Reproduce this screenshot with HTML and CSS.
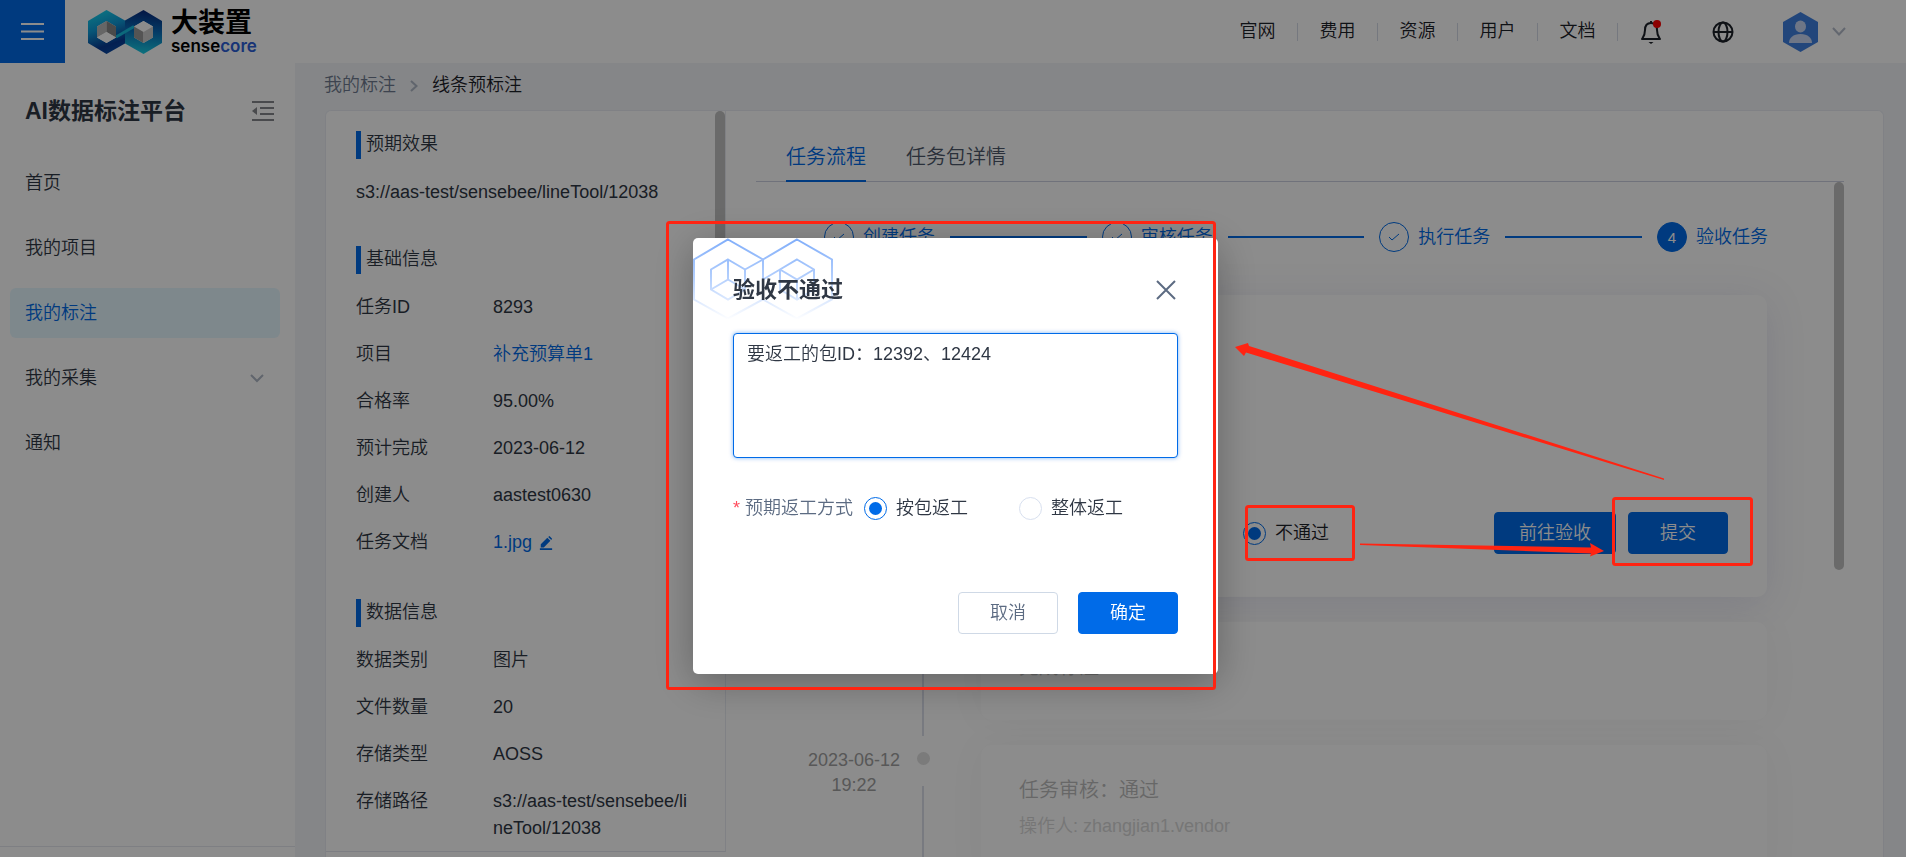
FILE: index.html
```html
<!DOCTYPE html>
<html lang="zh-CN">
<head>
<meta charset="utf-8">
<title>AI数据标注平台</title>
<link rel="stylesheet" href="styles.css">
</head>
<body>
<div class="app">
  <header class="header">
    <button class="menu-btn" type="button" aria-label="菜单">
      <svg width="24" height="18" viewBox="0 0 24 18" stroke="#fff" stroke-width="2"><path d="M0 2h23M0 9.500h23M0 17h23"/></svg>
    </button>
    <a class="logo" href="#">
      <svg width="74" height="44" viewBox="0 0 74 44">
        <defs>
          <linearGradient id="lg1" x1="0.300" y1="0" x2="0.600" y2="1"><stop offset="0" stop-color="#17d3ee"/><stop offset=".4" stop-color="#0f9ad8"/><stop offset=".8" stop-color="#083a94"/><stop offset="1" stop-color="#0a4aa4"/></linearGradient>
          <linearGradient id="lg2" x1="0.500" y1="0" x2="0.400" y2="1"><stop offset="0" stop-color="#08287c"/><stop offset=".45" stop-color="#0a6ab8"/><stop offset="1" stop-color="#18d0e6"/></linearGradient>
        </defs>
        <path fill="url(#lg1)" fill-rule="evenodd" d="M18.500 0 37 10.500v23L18.500 44 0 33V11zM18.500 11 9 16.500v11l9.500 5.500 9.500-5.500v-11z"/>
        <path fill="url(#lg2)" fill-rule="evenodd" d="M55.500 0 74 11v22L55.500 44 37 33.500v-23zM55.500 11 46 16.500v11l9.500 5.500 9.500-5.500v-11z"/>
        <path d="M28 27 46 16.500" stroke="#16bfe0" stroke-width="3"/>
        <path fill="#bbb" d="M18.500 11v11L9 27.500v-11z"/><path fill="#888" d="M18.500 11v11l9.500 5.500v-11z"/><path fill="#fff" d="M18.500 22 28 27.500 18.500 33 9 27.500z"/>
        <path fill="#fff" d="M55.500 11 65 16.500 55.500 22 46 16.500z"/><path fill="#999" d="M46 16.500 55.500 22v11L46 27.500z"/><path fill="#ccc" d="M65 16.500 55.500 22v11l9.500-5.500z"/>
      </svg>
      <span class="logo-text"><span class="logo-cn">大装置</span><span class="logo-en">sense<span class="logo-core">core</span></span></span>
    </a>
    <nav class="top-nav">
      <a href="#">官网</a><a href="#">费用</a><a href="#">资源</a><a href="#">用户</a><a href="#">文档</a>
    </nav>
    <div class="tools">
      <button class="icon-btn" type="button" aria-label="消息">
        <svg width="22" height="26" viewBox="0 0 22 26" fill="none" stroke="#1d2129" stroke-width="2"><path d="M10 4c-4 0-6 3-6 7 0 5-1 6-3 9h18c-2-3-3-4-3-9 0-4-2-7-6-7z" stroke-linejoin="round"/><path d="M7.500 23h5l-2.500 2z" fill="#1d2129" stroke="none"/><path d="M10 2v2"/><circle cx="16" cy="5" r="4" fill="#f00" stroke="none"/></svg>
      </button>
      <button class="icon-btn" type="button" aria-label="语言">
        <svg width="22" height="22" viewBox="0 0 22 22" fill="none" stroke="#1d2129" stroke-width="2"><circle cx="11" cy="11" r="9.500"/><ellipse cx="11" cy="11" rx="4.500" ry="9.500"/><path d="M1.500 11h19"/></svg>
      </button>
      <button class="icon-btn user-btn" type="button" aria-label="账户">
        <svg width="35" height="40" viewBox="0 0 35 40"><path fill="#3f80e0" d="M17.500 0 35 10v20L17.500 40 0 30V10z"/><ellipse cx="17.500" cy="14.500" rx="5.500" ry="6" fill="#c9d8f5"/><path fill="#c9d8f5" d="M6 31c0-5 4-9 11.500-9S29 26 29 31z"/></svg>
        <svg width="14" height="9" viewBox="0 0 14 9" fill="none" stroke="#b4bccb" stroke-width="2"><path d="M1 1l6 6.500L13 1"/></svg>
      </button>
    </div>
  </header>
  <div class="body">
    <aside class="sidebar">
      <div class="side-head">
        <h1 class="side-title">AI数据标注平台</h1>
        <button class="icon-btn" type="button" aria-label="收起">
          <svg width="24" height="22" viewBox="0 0 24 22" stroke="#86888c" stroke-width="2"><path d="M1 2h22M9 8h14M9 14h14M1 20h22"/><path d="M1 11l5-4v8z" fill="#86888c" stroke="none"/></svg>
        </button>
      </div>
      <nav class="side-nav">
        <a class="side-item" href="#">首页</a>
        <a class="side-item" href="#">我的项目</a>
        <a class="side-item active" href="#">我的标注</a>
        <a class="side-item" href="#">我的采集<svg width="14" height="10" viewBox="0 0 14 10" fill="none" stroke="#b0b8c6" stroke-width="2"><path d="M1 2l6 6 6-6"/></svg></a>
        <a class="side-item" href="#">通知</a>
      </nav>
      <div class="side-foot"></div>
    </aside>
    <main class="main">
      <nav class="crumbs">
        <a href="#">我的标注</a>
        <svg width="8" height="12" viewBox="0 0 8 12" fill="none" stroke="#b0b8c6" stroke-width="2"><path d="M1 1l5.500 5L1 11"/></svg>
        <span class="crumb-current">线条预标注</span>
      </nav>
      <div class="panel">
        <section class="info">
          <div class="info-inner">
            <h2 class="section-title">预期效果</h2>
            <p class="path">s3://aas-test/sensebee/lineTool/12038</p>
            <h2 class="section-title">基础信息</h2>
            <dl class="fields">
              <dt>任务ID</dt><dd>8293</dd>
              <dt>项目</dt><dd><a href="#">补充预算单1</a></dd>
              <dt>合格率</dt><dd>95.00%</dd>
              <dt>预计完成</dt><dd>2023-06-12</dd>
              <dt>创建人</dt><dd>aastest0630</dd>
              <dt>任务文档</dt><dd><a class="doc" href="#">1.jpg<svg width="14" height="14" viewBox="0 0 16 16" fill="#006be8"><path d="M2 9.500 9.500 2l3.500 3.500L5.500 13H2zM10.500 1 12 0l3 3-1 1.500zM1 14h14v2H1z"/></svg></a></dd>
            </dl>
            <h2 class="section-title">数据信息</h2>
            <dl class="fields">
              <dt>数据类别</dt><dd>图片</dd>
              <dt>文件数量</dt><dd>20</dd>
              <dt>存储类型</dt><dd>AOSS</dd>
              <dt>存储路径</dt><dd>s3://aas-test/sensebee/lineTool/12038</dd>
            </dl>
          </div>
          <div class="scrollbar info-bar"></div>
        </section>
        <section class="flow">
          <div class="tabs">
            <button class="tab tab-on" type="button">任务流程</button>
            <button class="tab" type="button">任务包详情</button>
          </div>
          <div class="scroll-area">
            <ol class="steps">
              <li class="step"><span class="dot"><svg width="12" height="10" viewBox="0 0 12 10"><path d="M1 5l3 3 7-6"/></svg></span>创建任务</li>
              <li class="bar"></li>
              <li class="step"><span class="dot"><svg width="12" height="10" viewBox="0 0 12 10"><path d="M1 5l3 3 7-6"/></svg></span>审核任务</li>
              <li class="bar"></li>
              <li class="step"><span class="dot"><svg width="12" height="10" viewBox="0 0 12 10"><path d="M1 5l3 3 7-6"/></svg></span>执行任务</li>
              <li class="bar"></li>
              <li class="step"><span class="dot dot-on">4</span>验收任务</li>
            </ol>
            <div class="timeline">
              <div class="event">
                <div class="time"></div>
                <div class="axis"></div>
                <div class="card card-current">
                  <label class="radio"><input type="radio" name="result" checked>不通过</label>
                  <button class="btn btn-primary" type="button">前往验收</button>
                  <button class="btn btn-primary" type="button">提交</button>
                </div>
              </div>
              <div class="event">
                <div class="time"></div>
                <div class="axis"></div>
                <div class="card"><p class="card-title">完成标注</p></div>
              </div>
              <div class="event">
                <div class="time">2023-06-12<br>19:22</div>
                <div class="axis"></div>
                <div class="card card-tall"><p class="card-title">任务审核：通过</p><p class="card-sub">操作人: zhangjian1.vendor</p></div>
              </div>
            </div>
            <div class="scrollbar flow-bar"></div>
          </div>
        </section>
      </div>
    </main>
  </div>
</div>

<div class="mask">
  <form class="modal" role="dialog" aria-labelledby="dlg-title">
    <svg class="modal-art" width="140" height="82" viewBox="0 0 140 82" fill="none" stroke="url(#fade)" stroke-width="2">
      <defs><linearGradient id="fade" gradientUnits="userSpaceOnUse" x1="0" y1="0" x2="0" y2="82"><stop offset="0" stop-color="#7fadfa"/><stop offset=".5" stop-color="#b5d0fd"/><stop offset="1" stop-color="#fff"/></linearGradient></defs>
      <path d="M35 1.500 70 21.500v40L35 80.500 1 61.500v-40zM104 1.500l35 20v40l-35 19-34-19v-40z"/>
      <path d="M35 21.500 52 31.500v20L35 61.500 18 51.500v-20zM35.010 21.500V41.500L18 51.500M35 41.500l17 10"/>
      <path d="M104 21.500l17 10v20l-17 10-17-10v-20zM87 31.500l17 10 17-10M104.010 41.500V61.500M52 31.500l18-10M70 41.500l17-10"/>
    </svg>
    <div class="modal-head">
      <h2 class="modal-title" id="dlg-title">验收不通过</h2>
      <button class="icon-btn close-btn" type="button" aria-label="关闭"><svg width="20" height="20" viewBox="0 0 20 20" stroke="#5c6b82" stroke-width="2"><path d="M1 1l18 18M19 1 1 19"/></svg></button>
    </div>
    <textarea class="reason" aria-label="原因">要返工的包ID：12392、12424</textarea>
    <div class="choice" role="radiogroup" aria-labelledby="way">
      <span class="choice-label" id="way"><span class="star">*</span>预期返工方式</span>
      <label class="radio"><input type="radio" name="way" checked>按包返工</label>
      <label class="radio radio-second"><input type="radio" name="way">整体返工</label>
    </div>
    <div class="modal-foot">
      <button class="btn" type="button">取消</button>
      <button class="btn btn-primary" type="button">确定</button>
    </div>
  </form>
</div>

<svg class="marks" width="1906" height="857" viewBox="0 0 1906 857" fill="none" stroke="#ff2412" stroke-width="3" aria-hidden="true">
  <rect x="667.500" y="222.500" width="547" height="466" rx="2"/>
  <rect x="1246.500" y="506.500" width="107" height="53" rx="2"/>
  <rect x="1613.500" y="498.500" width="138" height="66" rx="2"/>
  <g fill="#ff2412" stroke="none">
    <path d="M1360 543.500 1591 547.500 1590 543 1604 551 1590 556.500 1591 553.500 1360 545z"/>
    <path d="M1664 478.500 1249 346 1248 343 1235 347 1244 356 1246 352.500 1664 480z"/>
  </g>
</svg>
</body>
</html>
```

FILE: styles.css
```css
* { box-sizing: border-box; }
body {
  margin: 0;
  font: 350 18px/27px "Liberation Sans", "Noto Sans CJK SC", sans-serif;
  color: #2f3744;
  overflow: hidden;
}
h1, h2, p, dl, dd, ol { margin: 0; padding: 0; }
a { color: #006be8; text-decoration: none; }
button { font: inherit; cursor: pointer; }
svg { display: block; flex: none; }

.app { height: 100vh; display: flex; flex-direction: column; background: #f2f4f7; }
.header { height: 63px; flex: none; display: flex; align-items: center; background: #fff; }
.menu-btn { width: 65px; height: 100%; display: grid; place-items: center; padding: 0 0 2px; border: 0; background: #006be8; }
.logo { display: flex; align-items: center; gap: 9px; margin-left: 23px; color: #000; }
.logo-text { display: flex; flex-direction: column; }
.logo-cn { font-size: 27px; line-height: 28px; font-weight: 700; }
.logo-en { font: 600 17px/18px Inter, Roboto, sans-serif; }
.logo-core { color: #2d5fd8; }
.top-nav { margin-left: auto; display: flex; }
.top-nav a { width: 80px; height: 18px; line-height: 17px; text-align: center; color: #1d2129; border-right: 1px solid #d5dbe8; }
.icon-btn { display: flex; align-items: center; padding: 0; border: 0; background: none; }
.tools { display: flex; align-items: center; gap: 49px; padding: 0 60px 0 23px; }
.user-btn { gap: 14px; }

.body { flex: 1; min-height: 0; display: flex; }
.sidebar { width: 295px; flex: none; display: flex; flex-direction: column; background: #fff; }
.side-head { display: flex; justify-content: space-between; align-items: center; padding: 32px 20px 0 25px; }
.side-title { font-size: 23px; line-height: 32px; font-weight: 700; }
.side-nav { flex: 1; display: flex; flex-direction: column; gap: 15px; padding: 31px 15px 0 10px; }
.side-item { height: 50px; display: flex; align-items: center; justify-content: space-between; padding: 0 16px 0 15px; border-radius: 6px; color: #2f3744; }
.side-item.active { background: #e6f7ff; color: #006be8; }
.side-foot { height: 11px; border-top: 1px solid #e6e8ee; }

.main { flex: 1; min-width: 0; display: flex; flex-direction: column; padding-right: 22px; }
.crumbs { height: 47px; flex: none; display: flex; align-items: center; gap: 14px; padding: 0 0 2px 29px; }
.crumbs a { color: #6f7b90; }
.crumb-current { color: #1d2129; }
.panel { flex: 1; min-height: 0; margin-left: 30px; display: flex; background: #fff; border: 1px solid #e9ecf3; border-bottom: 0; border-radius: 6px 6px 0 0; }
.info { position: relative; width: 400px; flex: none; overflow: hidden; border-right: 1px solid #e9ecf3; margin-bottom: 5px; border-bottom: 1px solid #e3e6ee; }
.info-inner { padding: 20px 30px 0; }
.section-title { height: 28px; padding-left: 5px; border-left: 5px solid #006be8; font-size: 18px; line-height: 27px; font-weight: 350; margin-bottom: 20px; }
.path { margin-bottom: 40px; white-space: nowrap; }
.fields { display: grid; grid-template-columns: 137px 195px; row-gap: 20px; margin-bottom: 43px; }
.fields dd { word-break: break-all; }
.doc { display: flex; align-items: center; gap: 7px; }
.scrollbar { position: absolute; width: 10px; border-radius: 5px; background: #c1c1c1; }
.info-bar { top: 0; right: 0; height: 420px; }

.flow { flex: 1; min-width: 0; display: flex; flex-direction: column; padding: 0 39px 0 30px; }
.tabs { height: 71px; flex: none; display: flex; gap: 40px; padding-left: 30px; border-bottom: 1px solid #cdd0e0; }
.tab { height: 71px; padding: 22px 0 0; border: 0; border-bottom: 2px solid transparent; background: none; font-size: 20px; line-height: 30px; color: #4d586b; }
.tab-on { color: #006be8; border-bottom-color: #006be8; }
.scroll-area { position: relative; flex: 1; min-height: 0; overflow: hidden; }
.flow-bar { top: 0; right: 0; height: 388px; }
.steps { list-style: none; display: flex; align-items: center; gap: 15px; padding: 40px 76px 0 68px; color: #006be8; }
.step { display: flex; align-items: center; gap: 9px; }
.bar { flex: 1; height: 2px; background: #006be8; }
.dot { width: 30px; height: 30px; display: grid; place-items: center; border: 1px solid #006be8; border-radius: 50%; font-size: 15px; }
.dot svg { fill: none; stroke: #006be8; }
.dot-on { background: #006be8; color: #fff; }

.timeline { padding: 43px 77px 0 48px; }
.event { display: grid; grid-template-columns: 100px 13px 1fr; column-gap: 13px; }
.time { padding-top: 3px; text-align: center; line-height: 25px; color: #a0a0a0; }
.axis { display: flex; flex-direction: column; gap: 21px; padding: 7px 0 9px; }
.axis::before { content: ""; height: 13px; border-radius: 50%; background: #e0e0e0; }
.axis::after { content: ""; flex: 1; width: 2px; margin-left: 5px; background: #dadeea; }
.card { min-height: 98px; margin: 0 0 25px 38px; padding: 30px 38px; background: #fff; border-radius: 10px; box-shadow: 0 0 40px rgba(0, 0, 0, .04); }
.card-tall { min-height: 140px; }
.card-current { min-height: 302px; display: flex; align-items: flex-end; gap: 12px; padding-bottom: 43px; padding-right: 39px; box-shadow: 0 6px 40px rgba(60, 60, 150, .13); color: #1d2129; }
.card-current .radio { margin: 0 auto 0 224px; height: 42px; }
.card-title { font-size: 20px; line-height: 30px; margin-bottom: 8px; color: #bcbcbc; }
.card-sub { line-height: 26px; color: #d8d8d8; }

.btn { min-width: 100px; height: 42px; padding: 0 24px; border: 1px solid #cfd9e6; border-radius: 4px; background: #fff; color: #5c6b82; line-height: 26px; }
.btn-primary { border-color: #006be8; background: #006be8; color: #fff; }
.radio { display: flex; align-items: center; gap: 9px; }
.radio input { appearance: none; width: 23px; height: 23px; margin: 0; display: grid; place-items: center; border: 1px solid #d8e0ef; border-radius: 50%; background: #fff; }
.radio input:checked { border-color: #006be8; }
.radio input:checked::before { content: ""; width: 13px; height: 13px; border-radius: 50%; background: #006be8; }

.mask { position: fixed; inset: 0; z-index: 10; display: flex; justify-content: center; align-items: flex-start; padding: 238px 0 0 5px; background: rgba(0, 0, 0, .45); }
.modal { position: relative; width: 525px; padding: 36px 40px 40px; border-radius: 5px; background: #fff; box-shadow: 0 8px 40px rgba(0, 0, 0, .3); }
.modal-art { position: absolute; left: 0; top: 0; }
.modal-head { position: relative; display: flex; justify-content: space-between; align-items: center; }
.modal-title { font-size: 22px; line-height: 32px; font-weight: 700; }
.close-btn { margin-right: 2px; }
.reason { display: block; width: 100%; height: 125px; margin-top: 27px; padding: 7px 13px; border: 1px solid #006be8; border-radius: 4px; outline: 0; resize: none; box-shadow: 0 0 4px rgba(0, 107, 232, .5); font: inherit; color: inherit; }
.choice { display: flex; align-items: center; margin-top: 37px; }
.choice-label { display: flex; gap: 5px; margin-right: 11px; color: #5c6b82; }
.star { color: #ff4d5e; }
.radio-second { margin-left: 51px; }
.modal-foot { display: flex; justify-content: flex-end; gap: 20px; margin-top: 70px; }
.marks { position: fixed; left: 0; top: 0; z-index: 20; pointer-events: none; }
```
